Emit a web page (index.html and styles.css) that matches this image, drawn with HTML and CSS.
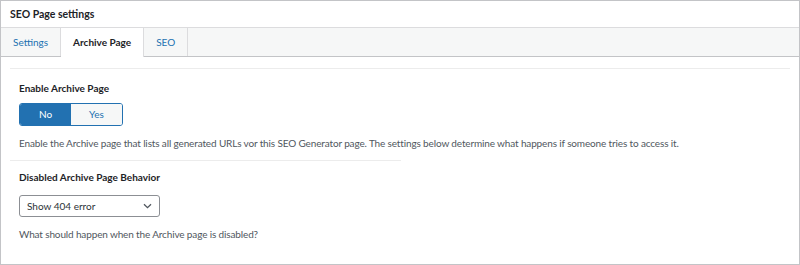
FILE: index.html
```html
<!DOCTYPE html>
<html>
<head>
<meta charset="utf-8">
<link rel="stylesheet" href="styles.css">
</head>
<body>
<div class="panel">
  <div class="panel-header">SEO Page settings</div>
  <div class="tabs">
    <div class="tab">Settings</div>
    <div class="tab active">Archive Page</div>
    <div class="tab">SEO</div>
  </div>
  <div class="content">
    <div class="sep sep-full"></div>
    <div class="field">
      <div class="label">Enable Archive Page</div>
      <div class="toggle">
        <span class="opt on">No</span>
        <span class="opt">Yes</span>
      </div>
      <p class="desc">Enable the Archive page that lists all generated URLs vor this SEO Generator page. The settings below determine what happens if someone tries to access it.</p>
    </div>
    <div class="sep sep-half"></div>
    <div class="field field-second">
      <div class="label">Disabled Archive Page Behavior</div>
      <div class="select">
        <span>Show 404 error</span>
        <svg class="chev" width="9" height="6" viewBox="0 0 9 6"><path d="M1 1.2l3.5 3.5 3.5-3.5" fill="none" stroke="#50575e" stroke-width="1.3"/></svg>
      </div>
      <p class="desc">What should happen when the Archive page is disabled?</p>
    </div>
  </div>
</div>
</body>
</html>
```
FILE: styles.css
```css
html, body {
  margin: 0;
  padding: 0;
  background: #ffffff;
}
body {
  font-family: Lato, "Open Sans", sans-serif;
  font-size: 10px;
  color: #1d2327;
}
.panel {
  width: 800px;
  height: 265px;
  box-sizing: border-box;
  border: 1px solid #c3c4c7;
  background: #fff;
}
.panel-header {
  height: 26px;
  line-height: 27px;
  padding: 0 9px;
  font-weight: 700;
  font-size: 10.5px;
  color: #1d2327;
}
.tabs {
  display: flex;
  height: 28px;
  background: #f6f7f7;
  border-top: 1px solid #dcdcde;
  border-bottom: 1px solid #c3c4c7;
}
.tab {
  padding: 0 12px 0 12px;
  line-height: 29px;
  color: #2271b1;
  border-right: 1px solid #dcdcde;
  font-size: 10px;
}
.tab.active {
  background: #fff;
  color: #1d2327;
  font-weight: 700;
  height: 29px;
  padding: 0 12px 0 12px;
}
.content {
  padding: 11px 9px 0 9px;
}
.sep {
  height: 1px;
  background: #ececec;
}
.sep-half {
  width: 391px;
  margin-top: 9px;
}
.field {
  padding: 0 9px;
}
.label {
  margin-top: 11px;
  line-height: 16px;
  font-weight: 700;
  font-size: 10px;
}
.field-second .label {
  margin-top: 8px;
}
.toggle {
  display: flex;
  width: 104px;
  height: 23px;
  margin-top: 7px;
  box-sizing: border-box;
  border: 1px solid #2271b1;
  border-radius: 3px;
  overflow: hidden;
}
.opt {
  flex: 1;
  text-align: center;
  line-height: 21px;
  background: #f6f7f7;
  color: #2271b1;
  font-size: 10px;
}
.opt.on {
  background: #2271b1;
  color: #fff;
}
.desc {
  margin: 9px 0 0;
  line-height: 16px;
  font-size: 10px;
  letter-spacing: -0.14px;
  color: #50575e;
}
.select {
  display: flex;
  align-items: center;
  justify-content: space-between;
  width: 141px;
  height: 22px;
  margin-top: 10px;
  box-sizing: border-box;
  border: 1px solid #8c8f94;
  border-radius: 3px;
  padding: 0 7px 0 7px;
  font-size: 10px;
  color: #2c3338;
}
.chev {
  display: block;
}
```
